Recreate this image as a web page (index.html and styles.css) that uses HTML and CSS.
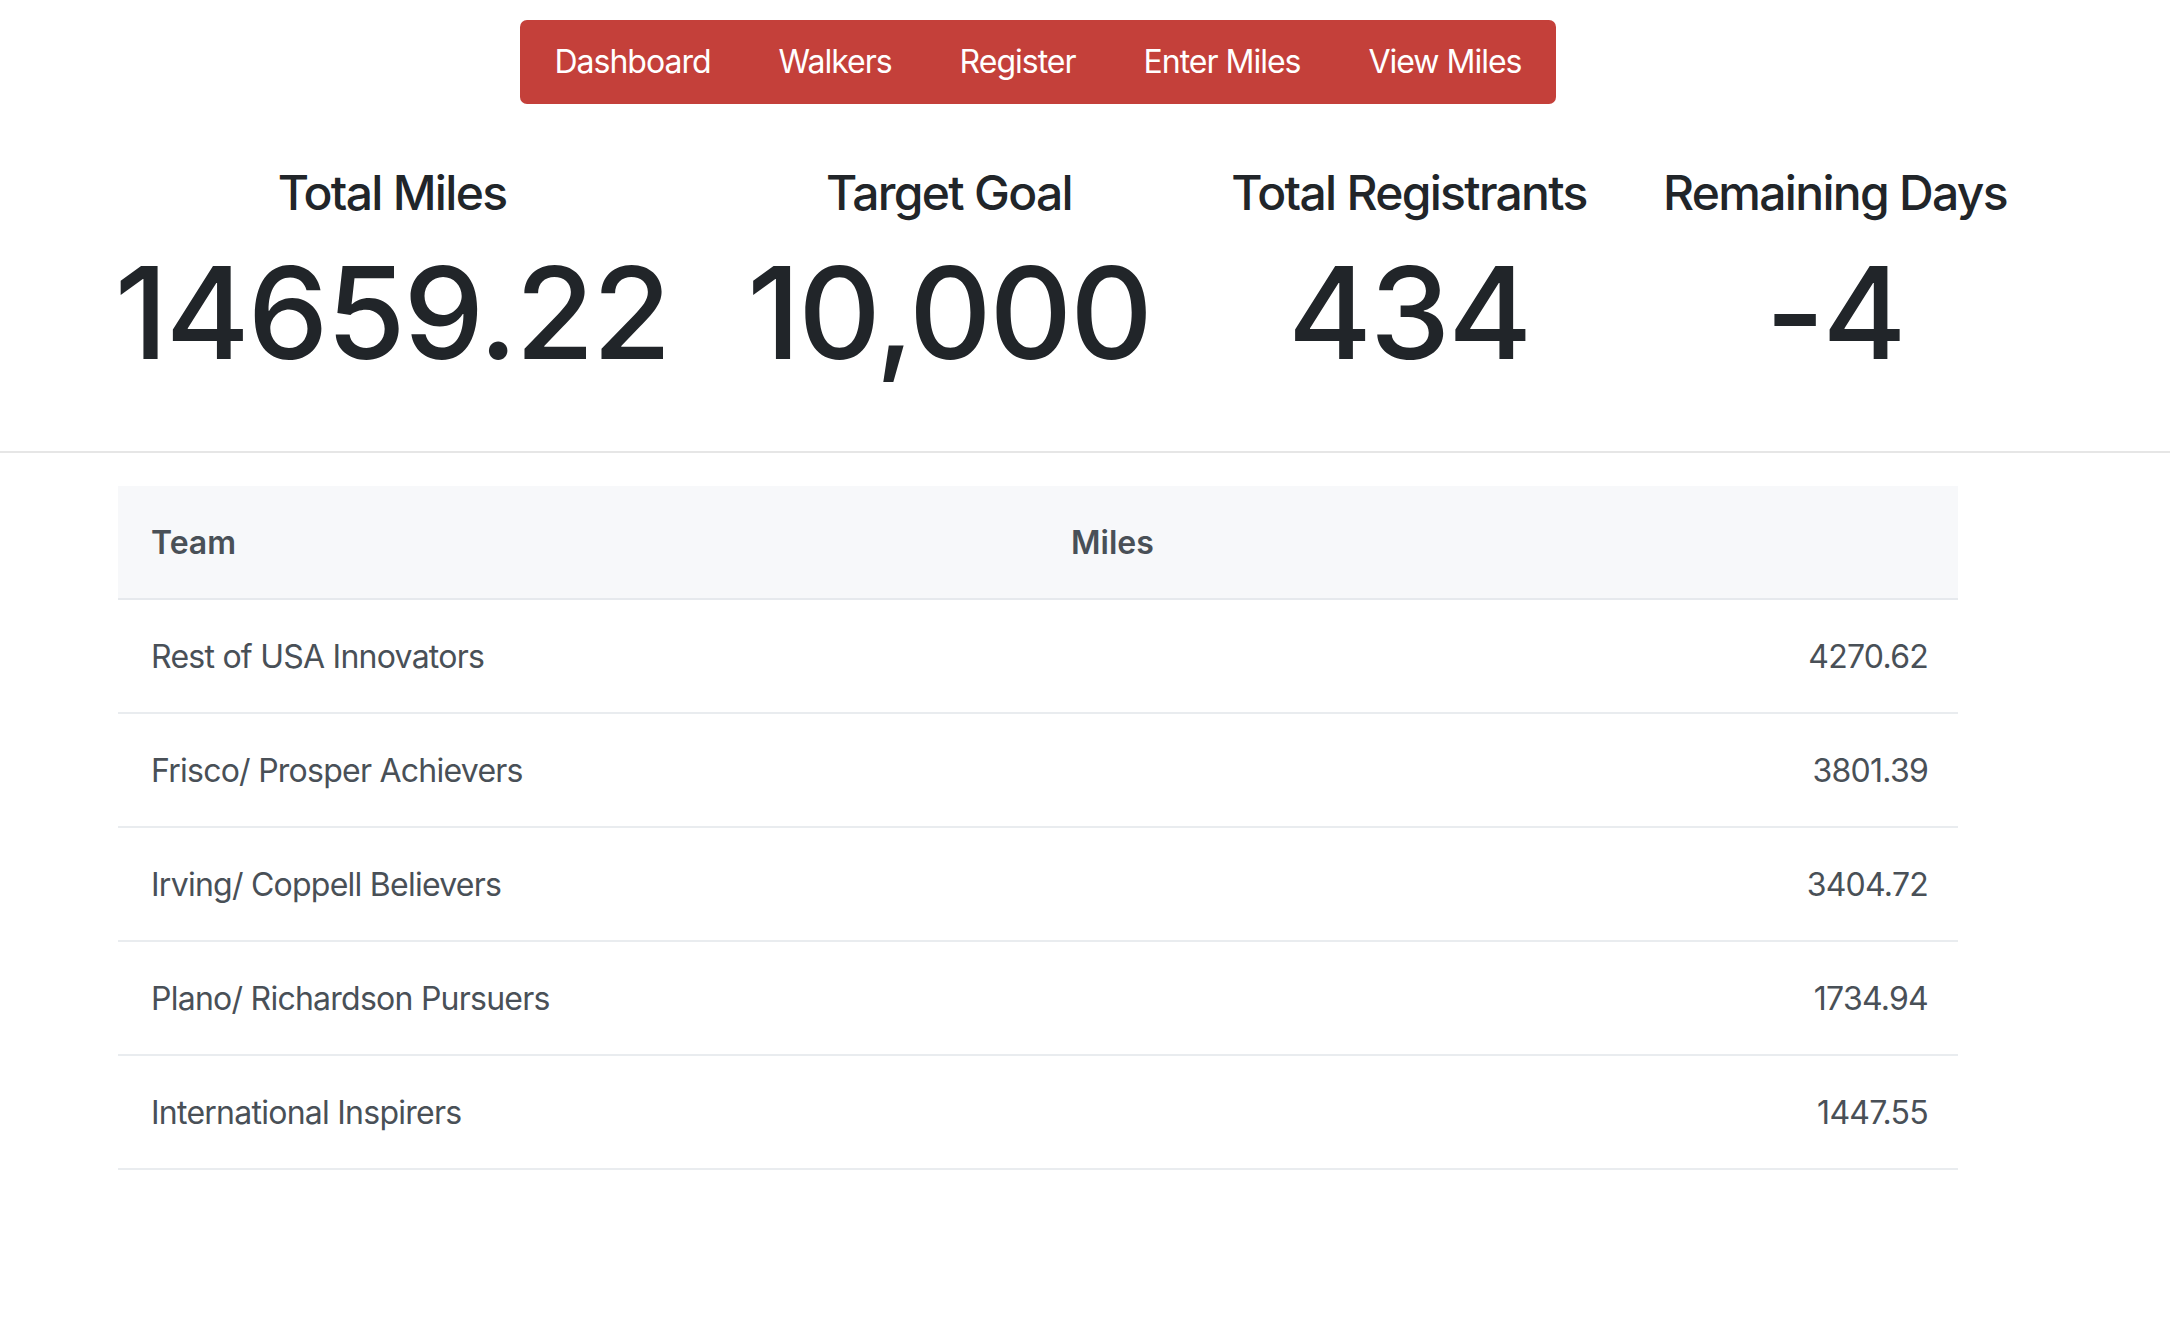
FILE: index.html
```html
<!DOCTYPE html>
<html lang="en">
<head>
<meta charset="utf-8">
<title>Dashboard</title>
<link rel="stylesheet" href="styles.css">
</head>
<body>
<div class="page">
  <div class="nav-wrap">
    <nav class="nav">
      <a class="nav-link" href="#">Dashboard</a>
      <a class="nav-link" href="#">Walkers</a>
      <a class="nav-link" href="#">Register</a>
      <a class="nav-link" href="#">Enter Miles</a>
      <a class="nav-link" href="#">View Miles</a>
    </nav>
  </div>
  <div class="stats">
    <div class="stat">
      <h4 class="stat-title">Total Miles</h4>
      <div class="stat-value">14659.22</div>
    </div>
    <div class="stat">
      <h4 class="stat-title">Target Goal</h4>
      <div class="stat-value">10,000</div>
    </div>
    <div class="stat">
      <h4 class="stat-title">Total Registrants</h4>
      <div class="stat-value">434</div>
    </div>
    <div class="stat">
      <h4 class="stat-title">Remaining Days</h4>
      <div class="stat-value">-4</div>
    </div>
  </div>
</div>
<hr class="divider">
<div class="page">
  <table class="teams">
    <thead>
      <tr><th>Team</th><th>Miles</th></tr>
    </thead>
    <tbody>
      <tr><td>Rest of USA Innovators</td><td class="num">4270.62</td></tr>
      <tr><td>Frisco/ Prosper Achievers</td><td class="num">3801.39</td></tr>
      <tr><td>Irving/ Coppell Believers</td><td class="num">3404.72</td></tr>
      <tr><td>Plano/ Richardson Pursuers</td><td class="num">1734.94</td></tr>
      <tr><td>International Inspirers</td><td class="num">1447.55</td></tr>
    </tbody>
  </table>
</div>
</body>
</html>
```
FILE: styles.css
```css
* { box-sizing: border-box; }
html, body {
  margin: 0;
  padding: 0;
  background: #ffffff;
  font-family: Inter, "Liberation Sans", Arial, sans-serif;
  color: #212529;
}
.page {
  width: 1840px;
  margin-left: 118px;
}
.nav-wrap {
  display: flex;
  justify-content: center;
  padding-top: 20px;
}
.nav {
  display: flex;
  background: #c4403a;
  border-radius: 7px;
}
.nav-link {
  display: block;
  padding: 18px 34px;
  font-size: 32px;
  line-height: 48px;
  color: #ffffff;
  text-decoration: none;
  letter-spacing: -1px;
}
.stats {
  display: grid;
  grid-template-columns: 632px 482px 438px 414px;
  margin-left: -42px;
  padding-top: 60px;
}
.stat {
  text-align: center;
}
.stat-title {
  margin: 0;
  font-size: 48px;
  line-height: 57px;
  font-weight: 500;
  letter-spacing: -1.7px;
}
.stat-value {
  margin-top: 15px;
  font-size: 128px;
  line-height: 154px;
  font-weight: 500;
  letter-spacing: -2px;
}
.divider {
  margin: 61px 0 33px;
  border: 0;
  border-top: 2px solid #e6e6e6;
  height: 0;
}
.teams {
  width: 100%;
  border-collapse: collapse;
  table-layout: fixed;
  font-size: 32px;
  line-height: 48px;
  color: #495057;
}
.teams th {
  text-align: left;
  font-weight: 600;
  background: #f7f8fa;
  padding: 33px 33px 31px;
  border-bottom: 2px solid #e6e9ed;
}
.teams td {
  padding: 33px 30px 31px 33px;
  border-bottom: 2px solid #e9ecef;
  letter-spacing: -0.75px;
}
.teams td.num {
  text-align: right;
}
```
